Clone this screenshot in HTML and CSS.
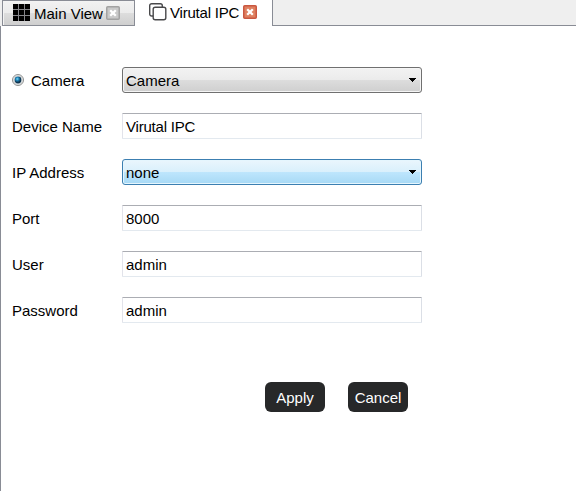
FILE: index.html
```html
<!DOCTYPE html>
<html lang="en">
<head>
<meta charset="utf-8">
<title>Virutal IPC</title>
<link rel="stylesheet" href="styles.css">
</head>
<body>
<nav class="tabs">
  <div class="tab">
    <svg class="grid-icon" width="17" height="17" viewBox="0 0 17 17" shape-rendering="crispEdges"><path d="M0 0h17v17H0z"/><path d="M5.5 0v17M11.5 0v17M0 5.5h17M0 11.5h17" stroke="#858589"/></svg>
    <span class="title">Main View</span>
    <svg class="close" width="14" height="14" viewBox="0 0 14 14"><rect x=".75" y=".75" width="12.5" height="12.5" rx="1" fill="#c9c9c9" stroke="#a2a2a2" stroke-width="1.5"/><path d="M4.2 4.2l5.6 5.6M9.8 4.2l-5.6 5.6" stroke="#fff" stroke-width="2.3"/></svg>
  </div>
  <div class="tab active">
    <svg class="stack-icon" width="18" height="18" viewBox="0 0 18 18" fill="none" stroke="#48484a" stroke-width="1.4"><path d="M4 13H2.7A2 2 0 0 1 .7 11V2.7a2 2 0 0 1 2-2h8.6a2 2 0 0 1 2 2V4"/><rect x="4.2" y="4.2" width="12.6" height="12.6" rx="2"/></svg>
    <span class="title tight">Virutal IPC</span>
    <svg class="close" width="14" height="14" viewBox="0 0 14 14"><rect x=".75" y=".75" width="12.5" height="12.5" rx="1" fill="#df8060" stroke="#c95740" stroke-width="1.5"/><path d="M4.2 4.2l5.6 5.6M9.8 4.2l-5.6 5.6" stroke="#fff" stroke-width="2.3"/></svg>
  </div>
  <div class="rest"></div>
</nav>
<main class="panel">
  <div class="row">
    <div class="label"><svg class="radio" width="12" height="12" viewBox="0 0 12 12"><defs><radialGradient id="dot" cx=".4" cy=".35"><stop offset="0" stop-color="#78daf8"/><stop offset=".5" stop-color="#1c80b4"/><stop offset="1" stop-color="#103550"/></radialGradient></defs><circle cx="6" cy="6" r="5.5" fill="#eee" stroke="#8e8f8f"/><circle cx="6" cy="6" r="4.3" fill="none" stroke="#c3c8cc" stroke-width=".7"/><circle cx="6" cy="6" r="3.4" fill="url(#dot)"/></svg>Camera</div>
    <div class="field select"><span>Camera</span><svg width="7" height="4" viewBox="0 0 7 4" shape-rendering="crispEdges"><path d="M0 0h7v1H6v1H5v1H4v1H3V3H2V2H1V1H0z"/></svg></div>
  </div>
  <div class="row"><div class="label">Device Name</div><div class="field tight">Virutal IPC</div></div>
  <div class="row">
    <div class="label">IP Address</div>
    <div class="field select hot"><span>none</span><svg width="7" height="4" viewBox="0 0 7 4" shape-rendering="crispEdges"><path d="M0 0h7v1H6v1H5v1H4v1H3V3H2V2H1V1H0z"/></svg></div>
  </div>
  <div class="row"><div class="label">Port</div><div class="field">8000</div></div>
  <div class="row"><div class="label">User</div><div class="field">admin</div></div>
  <div class="row"><div class="label">Password</div><div class="field">admin</div></div>
  <div class="actions"><button>Apply</button><button>Cancel</button></div>
</main>
</body>
</html>
```
FILE: styles.css
```css
* { box-sizing: border-box; }
body {
  margin: 0;
  height: 491px;
  display: flex;
  flex-direction: column;
  overflow: hidden;
  background: #fff;
  color: #000;
  font: 15px/18px "Liberation Sans", Arial, sans-serif;
}
.tabs { display: flex; height: 26px; background: #efefef; flex: none; }
.tab {
  display: flex;
  align-items: flex-start;
  width: 133px;
  margin-left: 2px;
  padding: 3px 0 0 10px;
  border: 1px solid #898c95;
  background: linear-gradient(#f2f2f2 0, #ebebeb 50%, #dddddd 51%, #cfcfcf 100%);
  box-shadow: inset 1px 1px 0 #f3f3f3;
}
.tab.active {
  width: 137px;
  margin-left: 0;
  padding: 3px 0 0 14px;
  border: 0;
  background: #fff;
  box-shadow: none;
}
.title { margin: 1px 0 0 4px; white-space: nowrap; }
.tight { letter-spacing: -.2px; }
.active .title { margin-left: 3px; }
.close { margin: 2px 0 0 3px; }
.active .close { margin-left: 4px; }
.rest { flex: 1; border-left: 1px solid #898c95; border-bottom: 1px solid #898c95; }
.panel {
  flex: 1;
  border-left: 1px solid #898c95;
  padding: 41px 0 0 11px;
  display: flex;
  flex-direction: column;
  gap: 20px;
}
.row { display: flex; height: 26px; }
.label { width: 110px; display: flex; align-items: center; padding-top: 1px; }
.radio { margin: -2px 7px 0 0; }
.field {
  width: 300px;
  height: 26px;
  display: flex;
  align-items: center;
  padding: 1px 0 0 3px;
  border: 1px solid;
  border-color: #abadb3 #dbdfe6 #e3e9ef #e2e3ea;
  border-radius: 1px;
}
.select {
  justify-content: space-between;
  padding-right: 5px;
  border-color: #707070;
  border-radius: 3px;
  background: linear-gradient(#f2f2f2 0, #ebebeb 50%, #dddddd 50%, #cfcfcf 100%);
  box-shadow: inset 0 0 0 1px #f5f5f5;
}
.select svg { margin-top: -1px; }
.select.hot {
  border-color: #3c7fb1;
  background: linear-gradient(#eaf6fd 0, #d9f0fc 50%, #bee6fd 50%, #a7d9f5 100%);
  box-shadow: inset 0 0 0 1px #e5f6fe;
}
.actions { display: flex; gap: 23px; margin: 39px 0 0 253px; }
button {
  width: 60px;
  height: 30px;
  padding: 2px 0 0;
  border: 0;
  border-radius: 6px;
  background: #272829;
  color: #fff;
  font: inherit;
}
```
